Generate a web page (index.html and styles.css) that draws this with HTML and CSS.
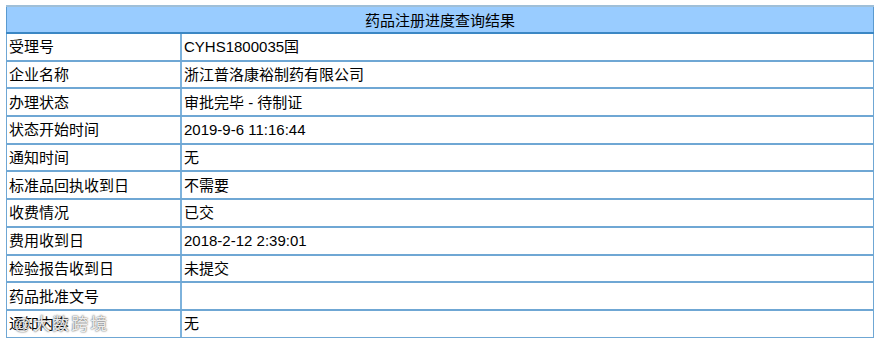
FILE: index.html
```html
<!DOCTYPE html>
<html lang="zh-CN">
<head>
<meta charset="utf-8">
<title>药品注册进度查询结果</title>
<link rel="stylesheet" href="styles.css">
</head>
<body>
<div class="wrap">
<table class="result">
  <thead>
    <tr><th colspan="2">药品注册进度查询结果</th></tr>
  </thead>
  <tbody>
    <tr><td class="k">受理号</td><td>CYHS1800035国</td></tr>
    <tr><td class="k">企业名称</td><td>浙江普洛康裕制药有限公司</td></tr>
    <tr><td class="k">办理状态</td><td>审批完毕 - 待制证</td></tr>
    <tr><td class="k">状态开始时间</td><td>2019-9-6 11:16:44</td></tr>
    <tr><td class="k">通知时间</td><td>无</td></tr>
    <tr><td class="k">标准品回执收到日</td><td>不需要</td></tr>
    <tr><td class="k">收费情况</td><td>已交</td></tr>
    <tr><td class="k">费用收到日</td><td>2018-2-12 2:39:01</td></tr>
    <tr><td class="k">检验报告收到日</td><td>未提交</td></tr>
    <tr><td class="k">药品批准文号</td><td></td></tr>
    <tr><td class="k">通知内容</td><td>无</td></tr>
  </tbody>
</table>
<div class="watermark">@大数跨境</div>
</div>
</body>
</html>
```

FILE: styles.css
```css
html, body {
  margin: 0;
  padding: 0;
  background: #ffffff;
}
body {
  padding: 5px 4px 0 6px;
  font-family: "Liberation Sans", "Noto Sans CJK SC", sans-serif;
  font-size: 15px;
  color: #000000;
}
.wrap {
  position: relative;
}
.result {
  width: 868px;
  border-collapse: collapse;
  border: 1px solid #5a9ad0;
  border-top: 2px solid #9fbfd8;
}
.result th {
  background: #99ccff;
  font-weight: normal;
  text-align: center;
  height: 25px;
  padding: 0;
  border-bottom: 2px solid #3b87c4;
}
.result td {
  height: 25.7px;
  padding: 0 0 0 2px;
  border: 1px solid #6fa7d4;
  border-bottom-width: 2px;
  white-space: nowrap;
  vertical-align: middle;
  line-height: 17px;
}
.result td.k {
  width: 171px;
  border-right: 2px solid #7db2dc;
}
.watermark {
  position: absolute;
  left: 8px;
  top: 305px;
  font-size: 17px;
  color: rgba(255, 255, 255, 0.9);
  text-shadow: 0 0 2px rgba(60, 60, 60, 0.8), 0 0 1px rgba(60, 60, 60, 0.6);
  letter-spacing: 2px;
  pointer-events: none;
}
```
